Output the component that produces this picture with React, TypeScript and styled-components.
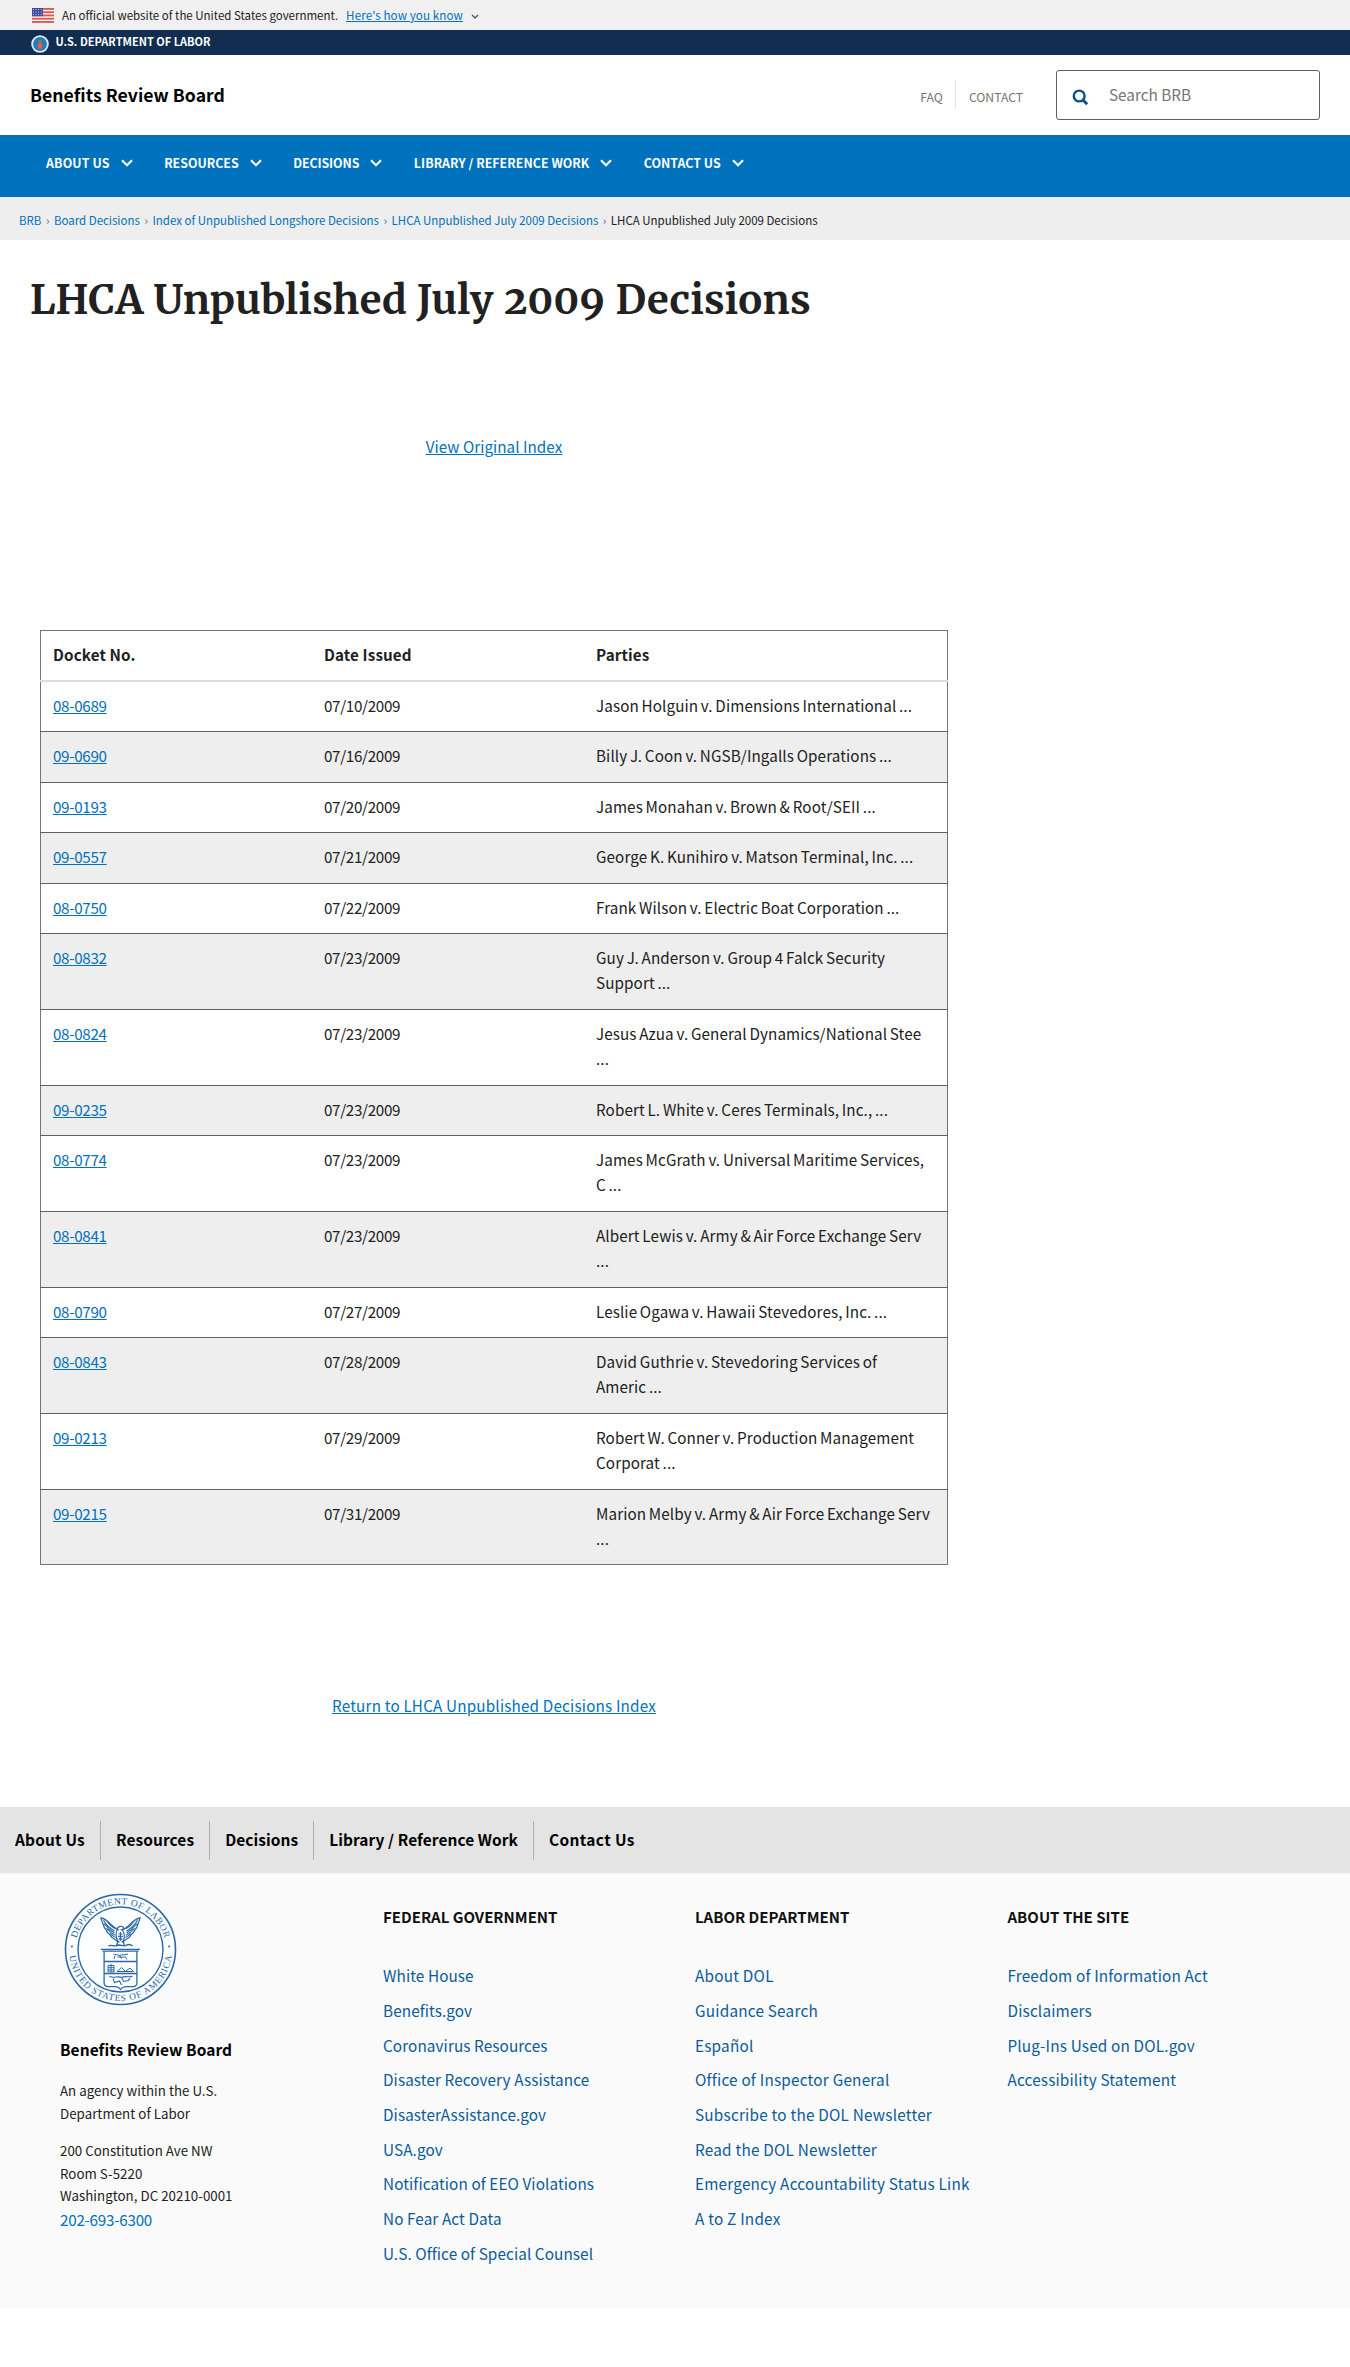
import React from 'react';
import styled, { createGlobalStyle } from 'styled-components';

const sans = '"Noto Sans CJK SC", "Noto Sans", sans-serif';
const serif = 'Merriweather, "Noto Serif", "DejaVu Serif Condensed", "Liberation Serif", serif';

const GlobalStyle = createGlobalStyle`
  *, *::before, *::after { box-sizing: border-box; }
  body { margin: 0; background: #fff; color: #212121; font-family: ${sans}; font-size: 15.22px; line-height: 25.4px; }
  a { color: #0071bc; text-decoration: none; }
  ul { list-style: none; margin: 0; padding: 0; }
`;

const Page = styled.div`
  min-height: 2367px;
  display: flex;
  flex-direction: column;
`;

const GovBanner = styled.div`
  height: 30px;
  display: flex;
  align-items: center;
  padding-left: 32px;
  background: #f0f0f0;
  font-size: 11.5px;
  line-height: 30px;

  a {
    margin-left: 8px;
    font-size: 11.6px;
    letter-spacing: 0.1px;
    text-decoration: underline;
    text-underline-offset: 1px;
  }
`;

const Flag = styled.svg`
  width: 22px;
  height: 15px;
  margin-right: 8px;
`;

const BannerChevron = styled.svg`
  width: 8px;
  height: 5px;
  margin: 2px 0 0 8px;
`;

const DeptBar = styled.div`
  height: 25px;
  display: flex;
  align-items: center;
  padding-left: 31px;
  background: #112e51;
`;

const DeptIcon = styled.svg`
  width: 18px;
  height: 18px;
  margin: 3px 6.5px 0 0;
`;

const DeptName = styled.a`
  color: #fff;
  font-size: 11px;
  font-weight: 700;
  line-height: 22px;
  padding-bottom: 3px;
`;

const Masthead = styled.header`
  height: 80px;
  display: flex;
  align-items: center;
  padding: 0 30px;
`;

const SiteName = styled.div`
  flex: 1;
  color: #000;
  font-size: 17.6px;
  font-weight: 700;
  letter-spacing: 0.04px;
`;

const UtilityLinks = styled.nav`
  display: flex;
  align-items: center;
  margin-right: 33px;
  font-size: 12.2px;

  a {
    color: #757575;
    line-height: 24px;
    padding-top: 4px;
  }
  a + a {
    border-left: 1px solid #e4e4e4;
    margin-left: 12px;
    padding-left: 13px;
  }
`;

const SearchBox = styled.div`
  width: 264px;
  height: 50px;
  display: flex;
  align-items: center;
  padding-left: 15px;
  border: 1px solid #5b616b;
  border-radius: 3px;
`;

const SearchIcon = styled.svg`
  width: 17px;
  height: 17px;
  margin: 4px 20px 0 0;
`;

const SearchInput = styled.input`
  flex: 1;
  min-width: 0;
  border: 0;
  outline: 0;
  padding: 0 0 2px;
  background: transparent;
  font: 15.3px/26px ${sans};
  &::placeholder { color: #757575; opacity: 1; }
`;

const MainNav = styled.nav`
  height: 62px;
  display: flex;
  align-items: flex-start;
  gap: 31.5px;
  padding: 1px 0 0 46px;
  background: #0071bc;
`;

const NavItem = styled.a<{ $spacing: number }>`
  display: flex;
  align-items: center;
  gap: 11px;
  color: #fff;
  font-size: 12.4px;
  font-weight: 700;
  line-height: 54px;
  letter-spacing: ${(p) => p.$spacing}px;

  svg { width: 12px; height: 8px; }
`;

const Breadcrumbs = styled.nav`
  height: 43px;
  display: flex;
  align-items: center;
  padding: 3px 0 0 19px;
  background: #eee;
  font-size: 11.5px;
  line-height: 20px;
  letter-spacing: -0.015px;
`;

const Separator = styled.span`
  width: 12.6px;
  text-align: center;
  color: #5b616b;
`;

const Main = styled.main`
  height: 1567px;
`;

const Title = styled.h1`
  margin: 0;
  padding: 30px 0 0 30px;
  font-family: ${serif};
  font-size: 40px;
  font-weight: 700;
  line-height: 60px;
  letter-spacing: 0.3px;
  font-variant-numeric: oldstyle-nums;
`;

const Content = styled.div`
  width: 908px;
  margin-left: 40px;
`;

const CenteredLink = styled.p<{ $top: number; $bottom: number; $spacing?: number }>`
  margin: ${(p) => `${p.$top}px 0 ${p.$bottom}px`};
  text-align: center;
  line-height: 26px;
  letter-spacing: ${(p) => p.$spacing ?? 0}px;
  a { text-decoration: underline; text-underline-offset: 1px; }
`;

const DocketTable = styled.table`
  width: 908px;
  table-layout: fixed;
  border-collapse: collapse;
  border: 1px solid #757575;

  th, td {
    padding: 11px 14px 13px 12px;
    text-align: left;
    vertical-align: top;
  }
  th { border-bottom: 2px solid #dcdcdc; padding-bottom: 12.5px; font-weight: 700; letter-spacing: 0.12px; }
  td { border-top: 1px solid #5b616b; }
  tr:first-child td { border-top: 2px solid #dcdcdc; }
  tbody tr:nth-child(even) { background: #eee; }
  td:first-child a { text-decoration: underline; text-underline-offset: 1px; }
`;

const Numeric = styled.td`
  letter-spacing: -0.33px;
`;

const Parties = styled.td`
  letter-spacing: 0.1px;
  word-spacing: -0.8px;
`;

const FooterNav = styled.nav`
  height: 66px;
  display: flex;
  align-items: center;
  background: #e4e4e4;
`;

const FooterNavLink = styled.a<{ $spacing: number }>`
  height: 39px;
  padding: 0 15px;
  color: #000;
  font-size: 15.45px;
  font-weight: 700;
  line-height: 36px;
  letter-spacing: ${(p) => p.$spacing}px;
  & + & { border-left: 1px solid #aeb0b5; }
`;

const Footer = styled.footer`
  height: 435px;
  display: grid;
  grid-template-columns: 323px 312px 312.5px 1fr;
  padding: 20px 0 0 60px;
  background: #fafafa;
`;

const Seal = styled.svg`
  display: block;
  width: 113px;
  height: 113px;
  margin: 0 0 30px 3.5px;
`;

const AgencyName = styled.div`
  color: #000;
  font-size: 15.5px;
  font-weight: 700;
  line-height: 26px;
  letter-spacing: 0.05px;
`;

const Address = styled.div<{ $top: number }>`
  margin-top: ${(p) => p.$top}px;
  font-size: 13.3px;
  line-height: 22.7px;
  letter-spacing: 0.03px;
  color: #212121;
`;

const Phone = styled.a`
  display: block;
  margin-top: -2px;
  line-height: 26px;
  letter-spacing: -0.25px;
`;

const LinkColumn = styled.div<{ $spacing: number }>`
  padding-top: 10.6px;

  h2 {
    margin: 0 0 28.5px;
    color: #111;
    font-size: 15px;
    font-weight: 700;
    line-height: 26px;
  }
  a {
    display: block;
    color: #0a5a9c;
    font-size: 15.3px;
    line-height: 34.7px;
    letter-spacing: ${(p) => p.$spacing}px;
  }
`;

const navItems = [
  { label: 'About Us', spacing: 0.13, footerSpacing: 0.19 },
  { label: 'Resources', spacing: 0, footerSpacing: 0.1 },
  { label: 'Decisions', spacing: -0.1, footerSpacing: 0.08 },
  { label: 'Library / Reference Work', spacing: 0.04, footerSpacing: 0.08 },
  { label: 'Contact Us', spacing: 0, footerSpacing: 0.38 },
];

const decisions: [string, string, string][] = [
  ['08-0689', '07/10/2009', 'Jason Holguin v. Dimensions International ...'],
  ['09-0690', '07/16/2009', 'Billy J. Coon v. NGSB/Ingalls Operations ...'],
  ['09-0193', '07/20/2009', 'James Monahan v. Brown & Root/SEII ...'],
  ['09-0557', '07/21/2009', 'George K. Kunihiro v. Matson Terminal, Inc. ...'],
  ['08-0750', '07/22/2009', 'Frank Wilson v. Electric Boat Corporation ...'],
  ['08-0832', '07/23/2009', 'Guy J. Anderson v. Group 4 Falck Security Support ...'],
  ['08-0824', '07/23/2009', 'Jesus Azua v. General Dynamics/National Stee ...'],
  ['09-0235', '07/23/2009', 'Robert L. White v. Ceres Terminals, Inc., ...'],
  ['08-0774', '07/23/2009', 'James McGrath v. Universal Maritime Services, C\u00a0...'],
  ['08-0841', '07/23/2009', 'Albert Lewis v. Army & Air Force Exchange Serv ...'],
  ['08-0790', '07/27/2009', 'Leslie Ogawa v. Hawaii Stevedores, Inc. ...'],
  ['08-0843', '07/28/2009', 'David Guthrie v. Stevedoring Services of Americ\u00a0...'],
  ['09-0213', '07/29/2009', 'Robert W. Conner v. Production Management Corporat ...'],
  ['09-0215', '07/31/2009', 'Marion Melby v. Army & Air Force Exchange Serv ...'],
];

const footerColumns = [
  {
    heading: 'FEDERAL GOVERNMENT',
    spacing: 0.09,
    links: [
      'White House', 'Benefits.gov', 'Coronavirus Resources', 'Disaster Recovery Assistance',
      'DisasterAssistance.gov', 'USA.gov', 'Notification of EEO Violations', 'No Fear Act Data',
      'U.S. Office of Special Counsel',
    ],
  },
  {
    heading: 'LABOR DEPARTMENT',
    spacing: 0.22,
    links: [
      'About DOL', 'Guidance Search', 'Español', 'Office of Inspector General',
      'Subscribe to the DOL Newsletter', 'Read the DOL Newsletter',
      'Emergency Accountability Status Link', 'A to Z Index',
    ],
  },
  {
    heading: 'ABOUT THE SITE',
    spacing: 0.17,
    links: ['Freedom of Information Act', 'Disclaimers', 'Plug-Ins Used on DOL.gov', 'Accessibility Statement'],
  },
];

function FlagIcon() {
  return (
    <Flag viewBox="0 0 22 15">
      <rect width="22" height="15" fill="#fff" />
      {[0, 1, 2, 3, 4].map((i) => (
        <rect key={i} y={i * 3.25} width="22" height="1.9" fill="#e0574f" />
      ))}
      <rect width="11" height="8.2" fill="#3b4a9f" />
      {[1.6, 4.1, 6.6].map((y) =>
        [1.4, 4, 6.6, 9.2].map((x) => <circle key={`${x}-${y}`} cx={x} cy={y} r="0.55" fill="#dfe3f5" />),
      )}
    </Flag>
  );
}

function NavChevron() {
  return (
    <svg viewBox="0 0 12 8">
      <path d="M1 1.2 L6 6.2 L11 1.2" fill="none" stroke="#fff" strokeWidth="2.2" />
    </svg>
  );
}

function DolSeal() {
  const blue = '#2a68a5';
  const wing = (
    <g>
      <path d="M-1.5 -3 C-5 -4 -8 -7 -10.5 -9.5 C-13 -12 -16 -14.5 -19.5 -15 C-19 -12 -18 -10 -17.2 -8.6 C-16.8 -6 -15.6 -4 -14.2 -3 C-13.5 -0.5 -12 1 -10.5 1.8 C-9.5 4 -8 5.4 -6 6 L-3 8.5 L-1 9" strokeWidth="1.3" />
      <path d="M-17 -13 C-15 -9 -11 -5 -6 -2 M-16.5 -9.4 C-13.5 -6 -10 -2.5 -6 0 M-14 -4.6 C-11.5 -2 -9 0.3 -5.6 2.2 M-10.4 0.6 C-8.5 2.4 -7 3.6 -4.8 4.4 M-13 -11.5 C-11.5 -8.5 -8.5 -6 -5.5 -4.4" strokeWidth="1.1" />
    </g>
  );
  return (
    <Seal viewBox="-56.5 -56.5 113 113">
      <defs>
        <path id="sealTop" d="M-45.2 0 A45.2 45.2 0 0 1 45.2 0" />
        <path id="sealBottom" d="M-51.6 0 A51.6 51.6 0 0 0 51.6 0" />
      </defs>
      <g fill="none" stroke={blue}>
        <circle r="55" strokeWidth="1.6" fill="#fdfeff" />
        <circle r="42.5" strokeWidth="1.4" />
        <g transform="translate(0 -16.5)">
          {wing}
          <g transform="scale(-1 1)">{wing}</g>
          <path d="M-3.4 -3 C-3.6 -7 3.2 -8.4 3.4 -4.2 L1 -3.4 C4.4 -1 4.6 4 2.6 8 M-3.4 -3 C-5 0 -4.6 5 -2.6 8 M-2.6 8 L-4 12.5 H4 L2.6 8 M-2 1 H2 M-2.4 3.4 H2.4 M-2 5.8 H2 M0 -1 V8" strokeWidth="1.2" />
          <path d="M-12 13 C-9 11 -6 14.4 -3 12.2 C0 10.8 3 14.4 6 12.2 C8.6 10.8 10.4 11.6 12 13" strokeWidth="1.4" />
        </g>
        <path d="M-19.5 -0.2 H19.5 M-18 1.6 H18" strokeWidth="1.3" />
        <path d="M-16.4 2 V33.4 C-16.4 36.4 -14.5 37.2 -11 37.2 H-5 C-2 37.4 -1 38.4 0 40 C1 38.4 2 37.4 5 37.2 H11 C14.5 37.2 16.4 36.4 16.4 33.4 V2 M-16.4 12 H16.4 M-16.4 24 H16.4" strokeWidth="1.3" />
        <path d="M-7 4.5 C-5 6.5 -3 4.2 -1 6 C2 4.4 4.5 6.2 7.5 4.4 M-5.5 6.5 L-6.5 9.5 M-3 7.6 H4 M4.5 6.8 L6.4 9.8 M-1 6 L1 9" strokeWidth="1" />
        <path d="M-12.5 16 H-6.5 V22.4 H-12.5 Z M-12.5 18.2 H-6.5 M-12.5 20.4 H-6.5 M-9.5 14.4 V22.4 M-3.5 22 L1 18 L5 22 M5 21.8 L9.6 18.6 L13 21.8 M-3.5 22 H13" strokeWidth="1" />
        <path d="M-11 26.8 C-7 29.6 -3 25.8 1 28 C5 25.8 8 28.4 12 26.8 M-7.5 29 L-6 33 L-1 31.4 L1 35.4 M1.4 28.6 L3 32 L8 31 L9.4 28.6" strokeWidth="1.1" />
      </g>
      <circle cx="-48.6" cy="-3" r="1" fill={blue} />
      <circle cx="48.6" cy="-3" r="1" fill={blue} />
      <g fill={blue} fontFamily='"Liberation Serif", serif' fontSize="9.4" textAnchor="middle">
        <text>
          <textPath href="#sealTop" startOffset="50%" textLength="119">DEPARTMENT OF LABOR</textPath>
        </text>
        <text>
          <textPath href="#sealBottom" startOffset="50%" textLength="149">UNITED STATES OF AMERICA</textPath>
        </text>
      </g>
    </Seal>
  );
}

export default function App() {
  return (
    <Page>
      <GlobalStyle />
      <GovBanner>
        <FlagIcon />
        <span>An official website of the United States government.</span>
        <a href="#how">Here's how you know</a>
        <BannerChevron viewBox="0 0 8 5">
          <path d="M1 1 L4 4 L7 1" fill="none" stroke="#4a5560" strokeWidth="1.3" />
        </BannerChevron>
      </GovBanner>
      <DeptBar>
        <DeptIcon viewBox="0 0 18 18">
          <circle cx="9" cy="9" r="8.8" fill="#dfe8ee" />
          <circle cx="9" cy="9" r="6.9" fill="#1c7cc4" />
          <path d="M6 4.6 L8 7 H10 L12 4.6 L11 8.6 H7 Z" fill="#7a6a4a" />
          <rect x="6.8" y="8.4" width="4.4" height="5.4" rx="0.6" fill="#e2603c" />
          <rect x="8.4" y="4.6" width="1.2" height="4" fill="#b5893e" />
        </DeptIcon>
        <DeptName href="#dol">U.S. DEPARTMENT OF LABOR</DeptName>
      </DeptBar>
      <Masthead>
        <SiteName>Benefits Review Board</SiteName>
        <UtilityLinks>
          <a href="#faq">FAQ</a>
          <a href="#contact">CONTACT</a>
        </UtilityLinks>
        <SearchBox>
          <SearchIcon viewBox="0 0 17 17">
            <circle cx="7.2" cy="7" r="5.4" fill="none" stroke="#0c4f8c" strokeWidth="2.4" />
            <path d="M11 11 L15.2 15.2" stroke="#0c4f8c" strokeWidth="3" />
          </SearchIcon>
          <SearchInput placeholder="Search BRB" />
        </SearchBox>
      </Masthead>
      <MainNav>
        {navItems.map((item) => (
          <NavItem key={item.label} href="#nav" $spacing={item.spacing}>
            {item.label.toUpperCase()}
            <NavChevron />
          </NavItem>
        ))}
      </MainNav>
      <Breadcrumbs>
        {['BRB', 'Board Decisions', 'Index of Unpublished Longshore Decisions', 'LHCA Unpublished July 2009 Decisions'].map(
          (crumb) => (
            <React.Fragment key={crumb}>
              <a href="#crumb">{crumb}</a>
              <Separator>›</Separator>
            </React.Fragment>
          ),
        )}
        <span>LHCA Unpublished July 2009 Decisions</span>
      </Breadcrumbs>
      <Main>
        <Title>LHCA Unpublished July 2009 Decisions</Title>
        <Content>
          <CenteredLink $top={103} $bottom={171} $spacing={0.04}>
            <a href="#original">View Original Index</a>
          </CenteredLink>
          <DocketTable>
            <colgroup>
              <col style={{ width: 271.5 }} />
              <col style={{ width: 272 }} />
              <col />
            </colgroup>
            <thead>
              <tr>
                <th>Docket No.</th>
                <th>Date Issued</th>
                <th>Parties</th>
              </tr>
            </thead>
            <tbody>
              {decisions.map(([docket, date, parties]) => (
                <tr key={docket}>
                  <Numeric>
                    <a href="#docket">{docket}</a>
                  </Numeric>
                  <Numeric>{date}</Numeric>
                  <Parties>{parties}</Parties>
                </tr>
              ))}
            </tbody>
          </DocketTable>
          <CenteredLink $top={126.5} $bottom={0} $spacing={0.19}>
            <a href="#return">Return to LHCA Unpublished Decisions Index</a>
          </CenteredLink>
        </Content>
      </Main>
      <FooterNav>
        {navItems.map((item) => (
          <FooterNavLink key={item.label} href="#footer" $spacing={item.footerSpacing}>
            {item.label}
          </FooterNavLink>
        ))}
      </FooterNav>
      <Footer>
        <div>
          <DolSeal />
          <AgencyName>Benefits Review Board</AgencyName>
          <Address $top={18}>
            An agency within the U.S.
            <br />
            Department of Labor
          </Address>
          <Address $top={14.5}>
            200 Constitution Ave NW
            <br />
            Room S-5220
            <br />
            Washington, DC 20210-0001
          </Address>
          <Phone href="#phone">202-693-6300</Phone>
        </div>
        {footerColumns.map((column) => (
          <LinkColumn key={column.heading} $spacing={column.spacing}>
            <h2>{column.heading}</h2>
            <ul>
              {column.links.map((link) => (
                <li key={link}>
                  <a href="#link">{link}</a>
                </li>
              ))}
            </ul>
          </LinkColumn>
        ))}
      </Footer>
    </Page>
  );
}
